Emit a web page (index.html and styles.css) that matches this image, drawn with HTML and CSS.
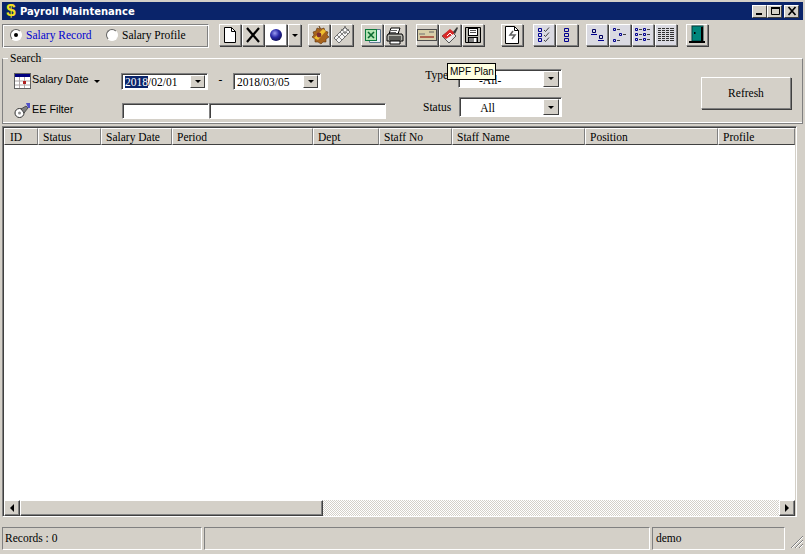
FILE: index.html
```html
<!DOCTYPE html>
<html lang="en">
<head>
    <meta charset="UTF-8">
    <title>Payroll Maintenance</title>
    <link rel="stylesheet" href="styles.css">
</head>
<body>
<div class="window">

    <div class="titlebar">
        <span class="app-icon">$</span>
        <span class="title">Payroll Maintenance</span>
        <div class="win-buttons">
            <button class="win-btn"><svg width="14" height="12"><rect x="3" y="8" width="6" height="2" fill="#000"/></svg></button>
            <button class="win-btn"><svg width="14" height="12"><path d="M3.5 2.5h8v7h-8z M3 3h9" fill="none" stroke="#000"/><rect x="3" y="2" width="9" height="2" fill="#000"/></svg></button>
            <button class="win-btn win-close"><svg width="14" height="12"><path d="M3.5 2l7 8M10.5 2l-7 8" stroke="#000" stroke-width="1.7"/></svg></button>
        </div>
    </div>

    <div class="toolbar-row">
        <div class="mode-panel">
            <span class="radio radio-on"></span><span class="mode-label mode-active">Salary Record</span>
            <span class="radio"></span><span class="mode-label">Salary Profile</span>
        </div>

        <div class="tools">
            <div class="tool-group group-edit">
                <button class="tool"><svg width="16" height="18"><path d="M2.500 1.500h7l4 4v11h-11z" fill="#fff" stroke="#000"/><path d="M9.500 1.500v4h4" fill="none" stroke="#000"/></svg></button>
                <button class="tool"><svg width="18" height="18"><path d="M3 2l12 14M15 2L3 16" stroke="#000" stroke-width="2.200"/></svg></button>
                <button class="tool tool-white"><svg width="16" height="16"><defs><radialGradient id="ball" cx="0.400" cy="0.350" r="0.700"><stop offset="0" stop-color="#9c9cf0"/><stop offset="0.500" stop-color="#2a2aa8"/><stop offset="1" stop-color="#0c0c50"/></radialGradient></defs><circle cx="8" cy="8" r="6" fill="url(#ball)"/></svg></button>
                <button class="tool tool-drop"><span class="caret"></span></button>
            </div>
            <div class="tool-group group-calc">
                <button class="tool"><svg width="20" height="20"><path d="M10 1l2 3 3-1 1 3 3 1-1 3 2 2-3 2 0 3-3 0-2 2-3-2-3 0 0-3-3-2 2-2-1-3 3-1 1-3 3 1z" fill="#a8641c" stroke="#5c3410" stroke-width="0.600"/><path d="M5 13L14 4l3 2-8 9z" fill="#f0c030"/><circle cx="10" cy="10" r="2.400" fill="#7c2c30"/></svg></button>
                <button class="tool"><svg width="20" height="20"><path d="M2 13L13 2l5 5L7 18z" fill="#f4f4f4" stroke="#707070"/><path d="M5 10l5 5M8 7l5 5M11 4l5 5M4 15L15 4" stroke="#808080"/><path d="M13 1l1 3 3 1-3 1-1 3-1-3-3-1 3-1z" fill="#fff" stroke="#404040" stroke-width="0.600"/></svg></button>
            </div>
            <div class="tool-group group-export">
                <button class="tool"><svg width="19" height="19"><path d="M6.500 3.500h11v13h-11z" fill="#e8f0f8" stroke="#607890"/><rect x="2.500" y="3.500" width="11" height="11" fill="#b4e4b4" stroke="#0c7a3c"/><path d="M5 6l6 6M11 6l-6 6" stroke="#0c6a30" stroke-width="1.600"/></svg></button>
                <button class="tool"><svg width="20" height="19"><path d="M6 2h9l-2 6H4z" fill="#fff" stroke="#000"/><path d="M3 8h14l1 2v5H2v-5z" fill="#b8b8b0" stroke="#000"/><path d="M4 11h12M4 13h12" stroke="#000"/><path d="M5 4.500h7M5 6.500h6" stroke="#606060"/><path d="M5 15h10v3H5z" fill="#fff" stroke="#000"/></svg></button>
            </div>
            <div class="tool-group group-mpf">
                <button class="tool"><svg width="20" height="12"><rect x="0.500" y="0.500" width="19" height="11" fill="#d8cfa8" stroke="#4c4c4c"/><path d="M2 5h6" stroke="#707070"/><path d="M3 8h14" stroke="#a04030" stroke-width="1.500"/><path d="M12 3h5" stroke="#606060"/></svg></button>
                <button class="tool"><svg width="20" height="20"><path d="M2 11L10 5l6 6-7 7z" fill="#e8e8e8" stroke="#555"/><path d="M2 11L10 4l5 4-9 6z" fill="#d82828"/><path d="M7 11l3-3 3 3" stroke="#fff" fill="none"/><path d="M13 7l4-5 1 1-3 6z" fill="#383838"/></svg></button>
                <button class="tool"><svg width="18" height="18"><path d="M1.500 1.500h15v15h-15z" fill="#b8b8b0" stroke="#000"/><rect x="4.500" y="2.500" width="9" height="7" fill="#fff" stroke="#000"/><path d="M6 4.500h6M6 6.500h6" stroke="#505050"/><rect x="4.500" y="11.500" width="9" height="5" fill="#808080" stroke="#000"/><rect x="10" y="12" width="2" height="4" fill="#fff"/></svg></button>
            </div>
            <div class="tool-group group-sync">
                <button class="tool"><svg width="16" height="20"><path d="M1.500 1.500h9l4 4v13h-13z" fill="#fff" stroke="#000"/><path d="M10.500 1.500v4h4" fill="none" stroke="#000"/><path d="M9 6L6 10h5l-3 4" fill="none" stroke="#606060" stroke-width="1.500"/></svg></button>
            </div>
            <div class="tool-group group-check">
                <button class="tool tool-tint"><svg width="16" height="16"><path d="M2.500 1.500h3v3h-3zM2.500 6.500h3v3h-3zM2.500 11.500h3v3h-3z" fill="none" stroke="#000090"/><path d="M8 3l1.500 1.500L13 0.500M8 8l1.500 1.500L13 5.500M8 13l1.500 1.500L13 10.500" fill="none" stroke="#404040"/></svg></button>
                <button class="tool"><svg width="16" height="16"><path d="M5.500 1.500h4v3h-4zM5.500 6.500h4v3h-4zM5.500 11.500h4v3h-4z" fill="none" stroke="#000090"/></svg></button>
            </div>
            <div class="tool-group group-view">
                <button class="tool tool-tint"><svg width="18" height="16"><path d="M4.500 2.500h3v3h-3zM11.500 8.500h3v3h-3z" fill="none" stroke="#000060"/><path d="M3 7.500h6M10 13.500h6" stroke="#000090"/></svg></button>
                <button class="tool tool-tint"><svg width="18" height="16"><path d="M2.500 1.500h2v2h-2zM8.500 6.500h2v2h-2zM2.500 12.500h2v2h-2z" fill="none" stroke="#000090"/><path d="M6 2.500h3M12 7.500h3M6 13.500h3" stroke="#404040"/></svg></button>
                <button class="tool tool-tint"><svg width="18" height="16"><path d="M1.500 1.500h2v2h-2zM9.500 1.500h2v2h-2zM1.500 6.500h2v2h-2zM9.500 6.500h2v2h-2zM1.500 11.500h2v2h-2zM9.500 11.500h2v2h-2z" fill="none" stroke="#000090"/><path d="M5 2.500h3M13 2.500h3M5 7.500h3M13 7.500h3M5 12.500h3M13 12.500h3" stroke="#404040"/></svg></button>
                <button class="tool tool-tint"><svg width="18" height="16"><path d="M1 1.500h16M1 3.500h16M1 5.500h16M1 7.500h16M1 9.500h16M1 11.500h16M1 13.500h16" stroke="#303030"/><path d="M4.500 1v13M8.500 1v13M12.500 1v13" stroke="#dcdce0"/></svg></button>
            </div>
            <div class="tool-group">
                <button class="tool"><svg width="18" height="20"><rect x="4" y="1" width="11" height="15" fill="#00867c" stroke="#003c3c"/><rect x="13" y="2" width="2" height="14" fill="#000"/><rect x="6" y="7" width="1.500" height="2" fill="#000"/><rect x="1" y="16" width="16" height="2" fill="#000"/></svg></button>
            </div>
        </div>
    </div>

    <fieldset class="search">
        <legend>Search</legend>
        <div class="search-body">
            <div class="filters">
                <div class="filter-row date-row">
                    <svg class="filter-icon" width="17" height="16"><rect x="0.500" y="0.500" width="16" height="15" fill="#fff" stroke="#606060"/><rect x="1" y="1" width="15" height="3" fill="#000080"/><path d="M1 8h15M1 12h15M5.500 4v11M10.500 4v11" stroke="#b0a8a8"/><rect x="9" y="8" width="3" height="3" fill="#b02020"/></svg>
                    <span class="filter-label">Salary Date</span>
                    <span class="caret caret-label"></span>
                    <div class="combo date-combo"><span class="date-text"><span class="selected">2018</span>/02/01</span><span class="combo-btn"><span class="caret"></span></span></div>
                    <span class="dash">-</span>
                    <div class="combo date-combo date-to"><span class="date-text">2018/03/05</span><span class="combo-btn"><span class="caret"></span></span></div>
                </div>
                <div class="filter-row ee-row">
                    <svg class="filter-icon" width="17" height="17"><circle cx="5.500" cy="11" r="4.500" fill="#fff" stroke="#303030"/><circle cx="5.500" cy="11" r="1.500" fill="#909090"/><path d="M7 7l5-3 2 2-4 5z" fill="#808080" stroke="#303030" stroke-width="0.700"/><path d="M12 1h4v5h-2z" fill="#5050c8"/></svg>
                    <span class="filter-label ee-label">EE Filter</span>
                    <div class="field ee-code"></div>
                    <div class="field ee-name"></div>
                </div>
            </div>

            <div class="selects">
                <div class="select-row type-row">
                    <span class="select-label">Type</span>
                    <div class="combo select-combo type-combo"><span class="select-text">-All-</span><span class="combo-btn"><span class="caret"></span></span></div>
                </div>
                <div class="select-row">
                    <span class="select-label">Status</span>
                    <div class="combo select-combo status-combo"><span class="select-text">All</span><span class="combo-btn"><span class="caret"></span></span></div>
                </div>
            </div>

            <button class="refresh">Refresh</button>
        </div>
        <div class="tooltip">MPF Plan</div>
    </fieldset>

    <div class="grid">
        <div class="grid-head">
            <div class="col col-id">ID</div>
            <div class="col col-status">Status</div>
            <div class="col col-date">Salary Date</div>
            <div class="col col-period">Period</div>
            <div class="col col-dept">Dept</div>
            <div class="col col-no">Staff No</div>
            <div class="col col-name">Staff Name</div>
            <div class="col col-pos">Position</div>
            <div class="col col-profile">Profile</div>
        </div>
        <div class="grid-body"></div>
        <div class="hscroll">
            <span class="sb-btn"><span class="tri-left"></span></span>
            <span class="sb-thumb"></span>
            <span class="sb-track"></span>
            <span class="sb-btn"><span class="tri-right"></span></span>
        </div>
    </div>

    <div class="statusbar">
        <div class="panel panel-records">Records : 0</div>
        <div class="panel panel-mid"></div>
        <div class="panel panel-user">demo</div>
        <svg class="grip" width="16" height="16"><path d="M15 3L3 15M15 7l-8 8M15 11l-4 4" stroke="#808080"/><path d="M15 4L4 15M15 8l-7 7M15 12l-3 3" stroke="#fff"/></svg>
    </div>

</div>
</body>
</html>
```

FILE: styles.css
```css
/* General */
html, body {
    margin: 0;
    height: 100%;
    overflow: hidden;
}

body {
    font-family: "Liberation Serif", serif;
    font-size: 11.5px;
    color: #000;
    background-color: #d4d0c8;
}

* { box-sizing: border-box; }

button {
    font: inherit;
    padding: 0;
    margin: 0;
    background-color: #d4d0c8;
}

.window {
    display: flex;
    flex-direction: column;
    width: 805px;
    height: 554px;
    padding-top: 2px;
}

/* Title bar */
.titlebar {
    display: flex;
    align-items: center;
    height: 18px;
    margin: 0 2px;
    padding-left: 3px;
    background-color: #0a246a;
    color: #fff;
}

.app-icon {
    width: 12px;
    font-family: "Liberation Sans", sans-serif;
    font-size: 17px;
    font-weight: bold;
    line-height: 18px;
    text-align: center;
    color: #f4e020;
}

.title {
    margin-left: 3px;
    font-family: "DejaVu Sans", sans-serif;
    font-size: 10px;
    font-weight: bold;
}

.win-buttons {
    display: flex;
    margin-left: auto;
    padding-right: 4px;
}

.win-btn {
    display: flex;
    align-items: center;
    justify-content: center;
    width: 15px;
    height: 13px;
    border: 1px solid;
    border-color: #fff #404040 #404040 #fff;
}

.win-close { margin-left: 2px; }

/* Toolbar */
.toolbar-row {
    display: flex;
    height: 24px;
    margin-top: 4px;
    padding-left: 2px;
}

.mode-panel {
    display: flex;
    align-items: center;
    width: 207px;
    padding: 0 0 2px 7px;
    border: 1px solid;
    border-color: #808080 #fff #fff #808080;
    box-shadow: inset 1px 1px 0 #fff, inset -1px -1px 0 #808080;
}

.radio {
    width: 12px;
    height: 12px;
    border-radius: 50%;
    border: 1px solid;
    border-color: #606060 #fff #fff #606060;
    background-color: #fff;
    position: relative;
}

.radio-on::after {
    content: "";
    position: absolute;
    top: 3px;
    left: 3px;
    width: 4px;
    height: 4px;
    border-radius: 50%;
    background-color: #000;
}

.mode-label {
    margin-left: 4px;
    width: 80px;
    white-space: nowrap;
}

.mode-active { color: #0000d0; }

.tools {
    display: flex;
    margin-left: 10px;
}

.tool-group {
    display: flex;
    gap: 1px;
}

.group-edit { margin-right: 7px; }
.group-calc { margin-right: 8px; }
.group-export { margin-right: 10px; }
.group-mpf { margin-right: 17px; }
.group-sync { margin-right: 10px; }
.group-check { margin-right: 8px; }
.group-view { margin-right: 9px; }

.tool {
    display: flex;
    align-items: center;
    justify-content: center;
    width: 22px;
    height: 22px;
    border: 1px solid;
    border-color: #fff #808080 #808080 #fff;
    box-shadow: 1px 1px 0 #404040;
}

.tool-white { background-color: #fff; }
.tool-tint { background-color: #dadae2; }
.tool-drop { width: 13px; }

.caret {
    display: block;
    width: 0;
    height: 0;
    border-left: 3px solid transparent;
    border-right: 3px solid transparent;
    border-top: 3px solid #000;
}

/* Search group */
.search {
    position: relative;
    height: 72px;
    margin: 4px 2px 0;
    padding: 0;
    border: 1px solid;
    border-color: #fff #808080 #808080 #808080;
    box-shadow: inset 0 -1px 0 #fff;
}

.search legend {
    margin-left: 5px;
    padding: 0 2px;
    line-height: 13px;
}

.search-body {
    display: flex;
    height: 58px;
}

.filters {
    display: flex;
    flex-direction: column;
    width: 420px;
    padding: 7px 0 0 11px;
}

.filter-row {
    display: flex;
    align-items: center;
}

.date-row { height: 18px; }
.ee-row { height: 17px; margin-top: 12px; }

.filter-icon { flex: none; }

.filter-label {
    margin-left: 1px;
    padding-bottom: 4px;
    width: 62px;
    font-family: "Liberation Sans", sans-serif;
    font-size: 10.8px;
    white-space: nowrap;
}

.ee-label { width: 90px; }

.caret-label { margin-right: 21px; }

.combo, .field {
    display: flex;
    align-items: center;
    background-color: #fff;
    border: 1px solid;
    border-color: #808080 #fff #fff #808080;
    box-shadow: inset 1px 1px 0 #404040;
}

.date-combo {
    width: 87px;
    height: 17px;
    padding: 2px 2px 1px 3px;
}

.date-to { width: 88px; }

.date-text { flex: 1; white-space: nowrap; }

.selected {
    background-color: #0a246a;
    color: #fff;
}

.dash { width: 25px; padding-bottom: 4px; text-align: center; }

.combo-btn {
    display: flex;
    align-items: center;
    justify-content: center;
    width: 15px;
    height: 13px;
    background-color: #d4d0c8;
    border: 1px solid;
    border-color: #fff #404040 #404040 #fff;
}

.field { height: 16px; }
.ee-code { width: 87px; }
.ee-name { width: 177px; }

.selects {
    display: flex;
    flex-direction: column;
    width: 139px;
    padding-top: 4px;
}

.select-row {
    display: flex;
    align-items: center;
    justify-content: flex-end;
    gap: 8px;
}

.type-row { height: 19px; margin-bottom: 9px; gap: 10px; }
.type-row .select-label { padding-bottom: 8px; }

.select-combo {
    width: 104px;
    height: 20px;
    padding-right: 2px;
}

.type-combo { height: 19px; }

.select-text { flex: 1; padding: 2px 0 0 20px; }

.select-combo .combo-btn { width: 16px; height: 16px; }

.refresh {
    width: 90px;
    height: 32px;
    margin: 12px 0 0 139px;
    border: 1px solid;
    border-color: #fff #808080 #808080 #fff;
    box-shadow: 1px 1px 0 #404040;
}

.tooltip {
    position: absolute;
    top: -2px;
    left: 444px;
    height: 17px;
    width: 49px;
    padding: 1px 0 0 2px;
    font-family: "Liberation Sans", sans-serif;
    font-size: 10px;
    line-height: 14px;
    white-space: nowrap;
    background-color: #ffffe1;
    border: 1px solid #000;
}

/* Data grid */
.grid {
    display: flex;
    flex-direction: column;
    width: 795px;
    height: 391px;
    margin: 2px 0 0 2px;
    border: 1px solid;
    border-color: #808080 #fff #fff #808080;
    box-shadow: inset 1px 1px 0 #404040;
    padding: 1px 1px 0 1px;
}

.grid-head {
    display: flex;
    height: 17px;
    flex: none;
}

.col {
    padding: 2px 0 0 4px;
    line-height: 13px;
    white-space: nowrap;
    border: 1px solid;
    border-color: #fff #808080 #404040 #fff;
}

.col-id { width: 34px; padding-left: 5px; }
.col-status { width: 63px; }
.col-date { width: 71px; }
.col-period { width: 141px; }
.col-dept { width: 66px; }
.col-no { width: 73px; }
.col-name { width: 133px; }
.col-pos { width: 133px; }
.col-profile { flex: 1; }

.grid-body {
    flex: 1;
    background-color: #fff;
}

.hscroll {
    display: flex;
    height: 16px;
    flex: none;
}

.sb-btn, .sb-thumb {
    display: flex;
    align-items: center;
    justify-content: center;
    border: 1px solid;
    border-color: #fff #404040 #404040 #fff;
    background-color: #d4d0c8;
    box-shadow: inset -1px -1px 0 #808080;
}

.sb-btn { width: 16px; flex: none; }
.sb-thumb { width: 303px; flex: none; }

.sb-track {
    flex: 1;
    background-color: #e9e7e3;
    background-image: repeating-conic-gradient(#d4d0c8 0 25%, #fff 0 50%);
    background-size: 2px 2px;
}

.tri-left, .tri-right {
    width: 0;
    height: 0;
    border-top: 4px solid transparent;
    border-bottom: 4px solid transparent;
}

.tri-left { border-right: 4px solid #000; }
.tri-right { border-left: 4px solid #000; }

/* Status bar */
.statusbar {
    display: flex;
    gap: 2px;
    height: 23px;
    margin-top: 10px;
    padding-left: 2px;
    position: relative;
}

.panel {
    padding: 4px 0 0 2px;
    border: 1px solid;
    border-color: #808080 #fff #fff #808080;
}

.panel-records { width: 200px; }
.panel-mid { width: 446px; }
.panel-user { width: 133px; padding-left: 3px; }

.grip {
    position: absolute;
    right: 1px;
    bottom: 1px;
}
```
